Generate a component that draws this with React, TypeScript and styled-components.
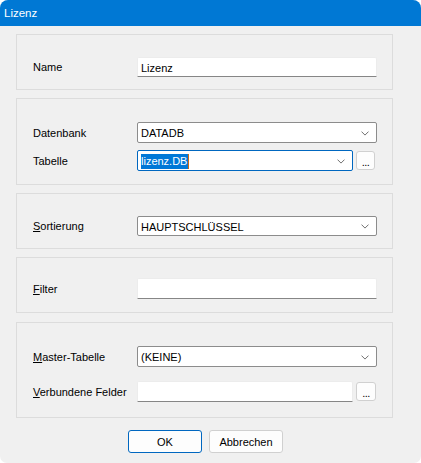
import React from "react";
import styled, { createGlobalStyle } from "styled-components";

const Global = createGlobalStyle`
  html, body { margin: 0; padding: 0; background: #ffffff; }
  body { font-family: "Liberation Sans", Arial, sans-serif; font-size: 11px; color: #000; }
`;

const Window = styled.div`
  width: 421px;
  height: 463px;
  box-sizing: border-box;
  background: #f0f0f0;
  border-radius: 8px 8px 7px 7px;
  overflow: hidden;
  display: flex;
  flex-direction: column;
`;

const TitleBar = styled.div`
  height: 26px;
  background: #0078d4;
  color: #ffffff;
  display: flex;
  align-items: center;
  padding-left: 4px;
  padding-bottom: 1px;
  box-sizing: border-box;
  font-family: "Liberation Sans", Arial, sans-serif;
  font-size: 11.5px;
  flex: none;
`;

const Content = styled.div`
  padding: 8px 28px 0 16px;
  display: flex;
  flex-direction: column;
  gap: 8px;
`;

const Group = styled.div<{ $pt: number; $pb: number; $gap?: number; $mt?: number }>`
  border: 1px solid #dcdcdc;
  padding: ${(p) => p.$pt}px 15px ${(p) => p.$pb}px 16px;
  margin-top: ${(p) => p.$mt ?? 0}px;
  display: flex;
  flex-direction: column;
  gap: ${(p) => p.$gap ?? 0}px;
`;

const Row = styled.div<{ $h: number }>`
  display: flex;
  align-items: center;
  height: ${(p) => p.$h}px;
`;

const Label = styled.div`
  width: 104px;
  flex: none;
  white-space: nowrap;
  u { text-decoration: underline; text-underline-offset: 1px; }
`;

const Edit = styled.div<{ $w: number }>`
  width: ${(p) => p.$w}px;
  height: 100%;
  box-sizing: border-box;
  background: #ffffff;
  border: 1px solid #ececec;
  border-bottom: 1px solid #868686;
  border-radius: 2px 2px 0 0;
  display: flex;
  align-items: center;
  padding-left: 3px;
  padding-top: 1px;
`;

const Combo = styled.div<{ $w: number; $focus?: boolean }>`
  width: ${(p) => p.$w}px;
  height: 100%;
  box-sizing: border-box;
  background: #ffffff;
  border: 1px solid ${(p) => (p.$focus ? "#0067c0" : "#8c8c8c")};
  border-radius: 2px;
  display: flex;
  align-items: center;
  padding-left: 2px;
  padding-right: 7px;
  padding-top: 1px;
`;

const ComboText = styled.div`
  flex: 1;
  padding-left: 1px;
  display: flex;
  align-items: center;
`;

const Selected = styled.span`
  background: #0078d7;
  color: #ffffff;
  padding: 1px 1px 2px 0;
  border-right: 1px solid #d06a10;
`;

const Chevron = styled.svg`
  width: 8px;
  height: 5px;
  flex: none;
`;

const DotsButton = styled.div<{ $w: number; $h: number }>`
  width: ${(p) => p.$w}px;
  height: ${(p) => p.$h}px;
  margin-left: 3px;
  box-sizing: border-box;
  background: #fdfdfd;
  border: 1px solid #d0d0d0;
  border-radius: 3px;
  display: flex;
  align-items: center;
  justify-content: center;
  font-size: 11px;
  padding-top: 2px;
  letter-spacing: -0.5px;
`;

const ButtonRow = styled.div`
  display: flex;
  justify-content: center;
  gap: 7px;
  margin-top: 4px;
  padding-left: 2px;
`;

const Button = styled.div<{ $primary?: boolean }>`
  width: 74px;
  height: 23px;
  box-sizing: border-box;
  background: #fdfdfd;
  border: 1px solid ${(p) => (p.$primary ? "#0067c0" : "#d0d0d0")};
  border-radius: 3px;
  display: flex;
  align-items: center;
  justify-content: center;
  font-size: 11px;
  padding-top: 1px;
`;

const Chev = () => (
  <Chevron viewBox="0 0 8 5">
    <path d="M0.5 0.6 L4 4.1 L7.5 0.6" fill="none" stroke="#606060" strokeWidth="0.9" />
  </Chevron>
);

export default function App() {
  return (
    <>
      <Global />
      <Window>
        <TitleBar>Lizenz</TitleBar>
        <Content>
          <Group $pt={22} $pb={12}>
            <Row $h={20}>
              <Label>Name</Label>
              <Edit $w={240}>Lizenz</Edit>
            </Row>
          </Group>
          <Group $pt={23} $pb={13} $gap={7}>
            <Row $h={21}>
              <Label>Datenbank</Label>
              <Combo $w={240}>
                <ComboText>DATADB</ComboText>
                <Chev />
              </Combo>
            </Row>
            <Row $h={21}>
              <Label>Tabelle</Label>
              <Combo $w={216} $focus>
                <ComboText>
                  <Selected>lizenz.DB</Selected>
                </ComboText>
                <Chev />
              </Combo>
              <DotsButton $w={19} $h={19}>...</DotsButton>
            </Row>
          </Group>
          <Group $pt={22} $pb={12}>
            <Row $h={20}>
              <Label>
                <u>S</u>ortierung
              </Label>
              <Combo $w={240}>
                <ComboText>HAUPTSCHLÜSSEL</ComboText>
                <Chev />
              </Combo>
            </Row>
          </Group>
          <Group $pt={20} $pb={13}>
            <Row $h={21}>
              <Label>
                <u>F</u>ilter
              </Label>
              <Edit $w={240} />
            </Row>
          </Group>
          <Group $pt={23} $pb={15} $gap={14} $mt={1}>
            <Row $h={21}>
              <Label>
                <u>M</u>aster-Tabelle
              </Label>
              <Combo $w={240}>
                <ComboText>(KEINE)</ComboText>
                <Chev />
              </Combo>
            </Row>
            <Row $h={21}>
              <Label>
                <u>V</u>erbundene Felder
              </Label>
              <Edit $w={216} />
              <DotsButton $w={20} $h={19}>...</DotsButton>
            </Row>
          </Group>
          <ButtonRow>
            <Button $primary>OK</Button>
            <Button>Abbrechen</Button>
          </ButtonRow>
        </Content>
      </Window>
    </>
  );
}
